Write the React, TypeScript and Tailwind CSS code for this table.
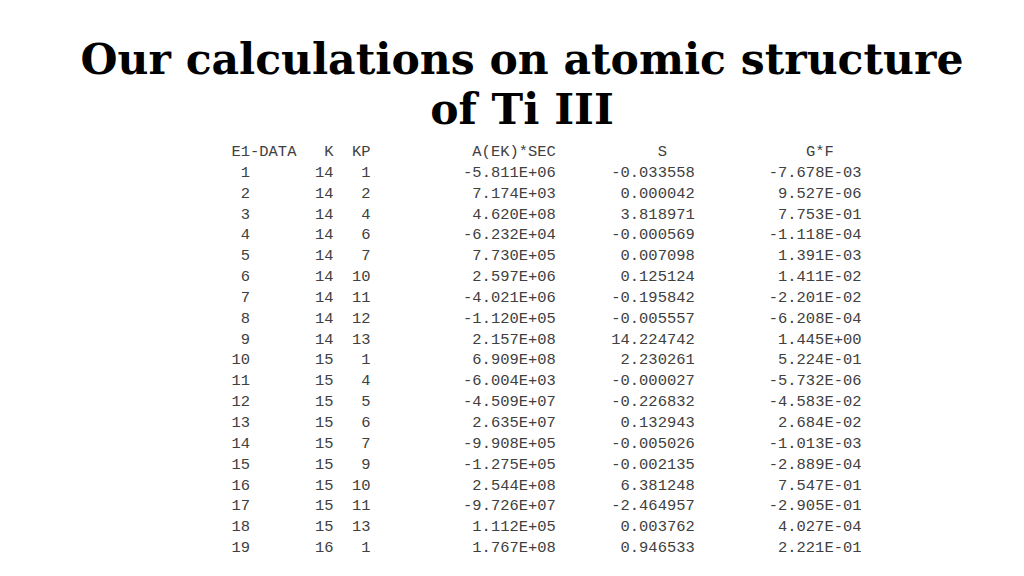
const rows: [number, number, number, string, string, string][] = [
  [1, 14, 1, "-5.811E+06", "-0.033558", "-7.678E-03"],
  [2, 14, 2, "7.174E+03", "0.000042", "9.527E-06"],
  [3, 14, 4, "4.620E+08", "3.818971", "7.753E-01"],
  [4, 14, 6, "-6.232E+04", "-0.000569", "-1.118E-04"],
  [5, 14, 7, "7.730E+05", "0.007098", "1.391E-03"],
  [6, 14, 10, "2.597E+06", "0.125124", "1.411E-02"],
  [7, 14, 11, "-4.021E+06", "-0.195842", "-2.201E-02"],
  [8, 14, 12, "-1.120E+05", "-0.005557", "-6.208E-04"],
  [9, 14, 13, "2.157E+08", "14.224742", "1.445E+00"],
  [10, 15, 1, "6.909E+08", "2.230261", "5.224E-01"],
  [11, 15, 4, "-6.004E+03", "-0.000027", "-5.732E-06"],
  [12, 15, 5, "-4.509E+07", "-0.226832", "-4.583E-02"],
  [13, 15, 6, "2.635E+07", "0.132943", "2.684E-02"],
  [14, 15, 7, "-9.908E+05", "-0.005026", "-1.013E-03"],
  [15, 15, 9, "-1.275E+05", "-0.002135", "-2.889E-04"],
  [16, 15, 10, "2.544E+08", "6.381248", "7.547E-01"],
  [17, 15, 11, "-9.726E+07", "-2.464957", "-2.905E-01"],
  [18, 15, 13, "1.112E+05", "0.003762", "4.027E-04"],
  [19, 16, 1, "1.767E+08", "0.946533", "2.221E-01"],
];

const App = () => {
  return (
    <div className="w-[1024px] h-[576px] bg-white overflow-hidden flex flex-col items-center">
      <h1 className="mt-[34px] ml-[20px] text-center text-black font-bold text-[42.5px] leading-[50px] [font-family:'DejaVu_Serif',serif]">
        Our calculations on atomic structure
        <br />
        of Ti III
      </h1>

      <div className="mt-[8px] ml-[69px] text-[#404040] text-[15.45px] leading-[20.84px] whitespace-pre [font-family:'Liberation_Mono',monospace]">
        <div className="flex">
          <span className="w-[11ch] flex justify-between">
            <span>E1-DATA</span>
            <span>K</span>
          </span>
          <span className="w-[4ch] text-right">KP</span>
          <span className="w-[20ch] text-right">A(EK)*SEC</span>
          <span className="w-[15ch] text-right pr-[3ch]">S</span>
          <span className="w-[18ch] text-right pr-[3ch]">G*F</span>
        </div>
        {rows.map(([i, k, kp, a, s, gf]) => (
          <div key={i} className="flex">
            <span className="w-[2ch] text-right">{i}</span>
            <span className="w-[9ch] text-right">{k}</span>
            <span className="w-[4ch] text-right">{kp}</span>
            <span className="w-[20ch] text-right">{a}</span>
            <span className="w-[15ch] text-right">{s}</span>
            <span className="w-[18ch] text-right">{gf}</span>
          </div>
        ))}
      </div>
    </div>
  );
};

export default App;
